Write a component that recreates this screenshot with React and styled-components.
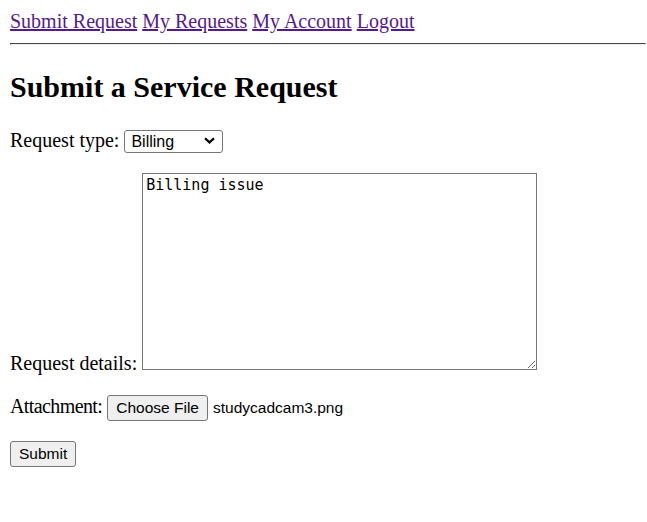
import React from "react";
import styled, { createGlobalStyle } from "styled-components";

const GlobalStyle = createGlobalStyle`
  html, body {
    background: #ffffff;
  }
  body {
    margin: 10px 1px 10px 10px;
    font-family: "Liberation Serif", "Times New Roman", serif;
    font-size: 20px;
    color: #000000;
  }
`;

const Nav = styled.nav`
  line-height: normal;
`;

const NavLink = styled.a`
  color: #551a8b;
  text-decoration: underline;
  cursor: pointer;
`;

const Rule = styled.hr`
  margin: 10px 0;
  border: 1px inset #eeeeee;
  border-top-color: #9a9a9a;
  border-left-color: #9a9a9a;
  height: 0;
`;

const Title = styled.h2`
  font-size: 30px;
  font-weight: bold;
  margin: 24.9px 0;
`;

const Row = styled.p`
  margin: 20px 0;
`;

const SelectWrap = styled.span`
  position: relative;
  display: inline-block;
`;

const Select = styled.select`
  appearance: none;
  -webkit-appearance: none;
  width: 99px;
  height: 23px;
  box-sizing: border-box;
  padding: 0 0 0 6px;
  border: 1px solid #767676;
  border-radius: 3px;
  background: #ffffff;
  color: #000000;
  font-family: "Liberation Sans", Arial, sans-serif;
  font-size: 16px;
  vertical-align: baseline;
`;

const Chevron = styled.svg`
  position: absolute;
  right: 8px;
  top: 8px;
  width: 11px;
  height: 7px;
  pointer-events: none;
`;

const Details = styled.textarea`
  width: 395px;
  height: 197px;
  box-sizing: border-box;
  margin: 0;
  padding: 2px 3px;
  border: 1px solid #767676;
  font-family: "DejaVu Sans Mono", "Liberation Mono", monospace;
  font-size: 15px;
  line-height: 1.2;
  color: #000000;
  resize: both;
  vertical-align: baseline;
`;

const ControlButton = styled.button`
  height: 26px;
  box-sizing: border-box;
  padding: 0 8px;
  margin: ${(p) => (p.$file ? "0 5px 0 0" : "0")};
  border: 1px solid #767676;
  border-radius: 3px;
  background: #efefef;
  color: #000000;
  font-family: "Liberation Sans", Arial, sans-serif;
  font-size: 15.5px;
`;

const FileName = styled.span`
  font-family: "Liberation Sans", Arial, sans-serif;
  font-size: 15.5px;
`;

const Label = styled.span`
  letter-spacing: ${(p) => p.$tight || 0};
`;

export default function App() {
  return (
    <>
      <GlobalStyle />
      <Nav>
        <NavLink href="#">Submit Request</NavLink>{" "}
        <NavLink href="#">My Requests</NavLink>{" "}
        <NavLink href="#">My Account</NavLink>{" "}
        <NavLink href="#">Logout</NavLink>
      </Nav>
      <Rule />
      <Title>Submit a Service Request</Title>
      <form onSubmit={(e) => e.preventDefault()}>
        <Row>
          <Label>Request type:</Label>{" "}
          <SelectWrap>
            <Select defaultValue="billing">
              <option value="billing">Billing</option>
              <option value="technical">Technical</option>
              <option value="other">Other</option>
            </Select>
            <Chevron viewBox="0 0 11 7">
              <path
                d="M1 1.2 L5.5 5.4 L10 1.2"
                fill="none"
                stroke="#000"
                strokeWidth="2.2"
              />
            </Chevron>
          </SelectWrap>
        </Row>
        <Row>
          <Label>Request details:</Label>{" "}
          <Details defaultValue="Billing issue" />
        </Row>
        <Row>
          <Label $tight="-0.6px">Attachment:</Label>{" "}
          <ControlButton type="button" $file>
            Choose File
          </ControlButton>
          <FileName>studycadcam3.png</FileName>
        </Row>
        <Row>
          <ControlButton type="submit">Submit</ControlButton>
        </Row>
      </form>
    </>
  );
}
